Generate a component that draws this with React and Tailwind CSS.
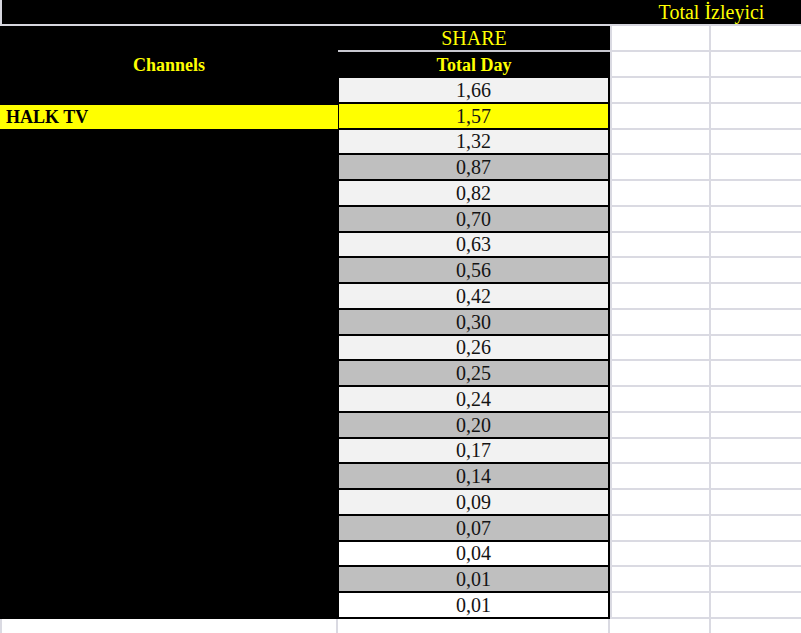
const ROWS = [
  { v: '1,66', bg: 'bg-[#f2f2f2]' },
  { v: '1,57', bg: 'bg-[#ffff00]', name: 'HALK TV' },
  { v: '1,32', bg: 'bg-[#f2f2f2]' },
  { v: '0,87', bg: 'bg-[#bfbfbf]' },
  { v: '0,82', bg: 'bg-[#f2f2f2]' },
  { v: '0,70', bg: 'bg-[#bfbfbf]' },
  { v: '0,63', bg: 'bg-[#f2f2f2]' },
  { v: '0,56', bg: 'bg-[#bfbfbf]' },
  { v: '0,42', bg: 'bg-[#f2f2f2]' },
  { v: '0,30', bg: 'bg-[#bfbfbf]' },
  { v: '0,26', bg: 'bg-[#f2f2f2]' },
  { v: '0,25', bg: 'bg-[#bfbfbf]' },
  { v: '0,24', bg: 'bg-[#f2f2f2]' },
  { v: '0,20', bg: 'bg-[#bfbfbf]' },
  { v: '0,17', bg: 'bg-[#f2f2f2]' },
  { v: '0,14', bg: 'bg-[#bfbfbf]' },
  { v: '0,09', bg: 'bg-[#f2f2f2]' },
  { v: '0,07', bg: 'bg-[#bfbfbf]' },
  { v: '0,04', bg: 'bg-white' },
  { v: '0,01', bg: 'bg-[#bfbfbf]' },
  { v: '0,01', bg: 'bg-white' },
];

function EmptyCells() {
  return (
    <>
      <div className="bg-white border-l-2 border-b-2 border-r-2 border-[#dadae2]" />
      <div className="bg-white border-b-2 border-[#dadae2]" />
    </>
  );
}

export default function App() {
  return (
    <div
      className="w-[801px] h-[633px] overflow-hidden bg-white grid grid-cols-[338px_272px_101px_1fr] grid-rows-[26px_26px_26px_repeat(21,25.76px)_1fr]"
      style={{ fontFamily: '"Liberation Serif", "Times New Roman", serif' }}
    >
      {/* Title row */}
      <div className="col-span-2 bg-black border-l-2 border-b-2 border-l-[#d6d6de] border-b-[#d6d6de]" />
      <div className="col-span-2 bg-black border-b-2 border-[#d6d6de] flex items-center justify-center text-[20px] text-[#ffff00] leading-none pl-[12px]">
        Total İzleyici
      </div>

      {/* SHARE row */}
      <div className="bg-black" />
      <div className="bg-black border-b-2 border-[#c8c8d0] flex items-center justify-center text-[20px] text-[#ffff00] leading-none">
        SHARE
      </div>
      <EmptyCells />

      {/* Total Day row */}
      <div className="bg-black flex items-center justify-center text-[18px] font-bold text-[#ffff00] leading-none">
        Channels
      </div>
      <div className="bg-black flex items-center justify-center text-[18px] font-bold text-[#ffff00] leading-none">
        Total Day
      </div>
      <EmptyCells />

      {ROWS.map((r, i) => (
        <div key={i} className="contents">
          {r.name ? (
            <div className="bg-[#ffff00] border-y border-black flex items-center pl-[6px] text-[18px] font-bold text-black leading-none">
              {r.name}
            </div>
          ) : (
            <div className="bg-black" />
          )}
          <div
            className={`${r.bg} border-l border-r-2 border-b-2 border-black flex items-center justify-center text-[20px] text-[#141414] leading-none`}
          >
            {r.v}
          </div>
          <EmptyCells />
        </div>
      ))}

      {/* trailing empty row */}
      <div className="bg-white border-l-2 border-r-2 border-[#dadae2]" />
      <div className="bg-white border-r-2 border-[#dadae2]" />
      <div className="bg-white border-r-2 border-[#dadae2]" />
      <div className="bg-white" />
    </div>
  );
}
